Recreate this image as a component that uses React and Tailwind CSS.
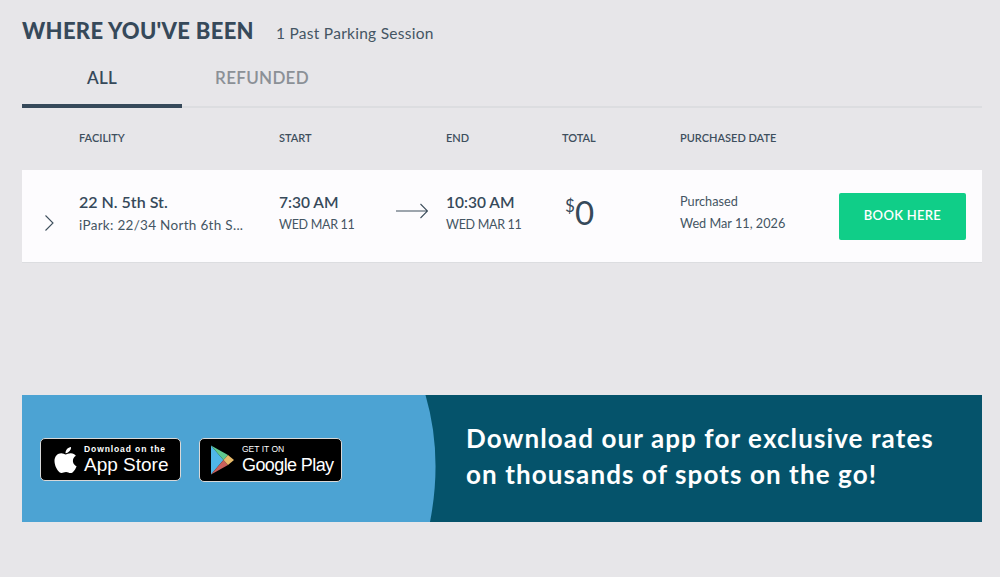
import React from 'react';
import { FaApple } from 'react-icons/fa';

// ============================================================
// PAST SESSIONS PAGE
// ============================================================
const Col = ({ className, children }) => <div className={`shrink-0 ${className}`}>{children}</div>;

const PlayLogo = () => (
  <svg width="24" height="30" viewBox="0 0 24 30" className="shrink-0">
    <polygon points="1,0.500 1,29.500 13.500,15" fill="#4fb6e8" />
    <polygon points="1,0.500 13.500,15 18,10" fill="#5fc98e" />
    <polygon points="1,29.500 13.500,15 18,20" fill="#c9605c" />
    <polygon points="18,10 24,15 18,20 13.500,15" fill="#e8bb6a" />
  </svg>
);

export default function App() {
  return (
    <div className="w-[1000px] h-[577px] overflow-hidden bg-[#e7e6e9] pl-[22px] pr-[18px] pt-[17px] text-[#36495a] font-['Lato',sans-serif]">
      {/* Title */}
      <div className="flex items-baseline h-[28px]">
        <h1 className="text-[22px] font-black leading-[28px] tracking-[0.3px] w-[254px] whitespace-nowrap">WHERE YOU'VE BEEN</h1>
        <span className="text-[15.5px] tracking-[0.27px] text-[#445563]">1 Past Parking Session</span>
      </div>

      {/* Tabs */}
      <div className="flex h-[63px] border-b-2 border-[#dcdde0]">
        <div className="w-[160px] h-[63px] border-b-4 border-[#36495a] flex items-center justify-center pt-[7px] text-[17px] tracking-[0.3px] font-semibold">ALL</div>
        <div className="w-[160px] h-[63px] flex items-center justify-center pt-[3px] text-[17px] tracking-[0.3px] font-semibold text-[#8b9096]">REFUNDED</div>
      </div>

      {/* Column headers */}
      <div className="flex items-center h-[62px] pb-[2px] text-[11px] font-semibold text-[#3e4f5d]">
        <Col className="w-[57px]" />
        <Col className="w-[200px]">FACILITY</Col>
        <Col className="w-[167px]">START</Col>
        <Col className="w-[116px]">END</Col>
        <Col className="w-[118px]">TOTAL</Col>
        <Col>PURCHASED DATE</Col>
      </div>

      {/* Session row */}
      <div className="flex items-center h-[93px] bg-[#fdfcfe] border-b border-[#dcdde0]">
        <Col className="w-[57px] pl-[22px] pt-[13px]">
          <svg width="10" height="16" viewBox="0 0 10 16" fill="none" stroke="#3e4f5d" strokeWidth="1.1">
            <path d="M1.500 0.500 L9 8 L1.500 15.500" />
          </svg>
        </Col>
        <Col className="w-[200px] pb-[6px]">
          <div className="text-[16px] font-semibold leading-[22px]">22 N. 5th St.</div>
          <div className="text-[13.5px] leading-[22px] mt-[1px] tracking-[0.3px] text-[#445563] whitespace-nowrap">iPark: 22/34 North 6th S...</div>
        </Col>
        <Col className="w-[117px] pb-[6px]">
          <div className="text-[15.5px] font-semibold leading-[22px]">7:30 AM</div>
          <div className="text-[12.5px] leading-[22px] mt-[1px] tracking-[-0.3px] text-[#445563] whitespace-nowrap">WED MAR 11</div>
        </Col>
        <Col className="w-[50px] pb-[11px]">
          <svg width="32" height="16" viewBox="0 0 32 16" fill="none" stroke="#3e4f5d" strokeWidth="1.1">
            <path d="M0 8 H31 M24.500 1 L31.500 8 L24.500 15" />
          </svg>
        </Col>
        <Col className="w-[116px] pb-[6px]">
          <div className="text-[15.5px] font-semibold leading-[22px]">10:30 AM</div>
          <div className="text-[12.5px] leading-[22px] mt-[1px] tracking-[-0.3px] text-[#445563] whitespace-nowrap">WED MAR 11</div>
        </Col>
        <Col className="w-[118px] pb-[8px] flex items-start pl-[3px]">
          <span className="text-[17px] leading-[20px] mt-[2px]">$</span>
          <span className="text-[33px] leading-[36px]">0</span>
        </Col>
        <Col className="w-[159px] pb-[9px] text-[12.7px] leading-[22px] text-[#445563]">
          <div>Purchased</div>
          <div>Wed Mar 11, 2026</div>
        </Col>
        <button className="w-[127px] h-[47px] mt-[1px] pb-[2px] rounded-[2px] bg-[#10ce88] text-white text-[13px] font-semibold tracking-[0.3px]">BOOK HERE</button>
      </div>

      {/* App banner */}
      <div className="relative flex items-center mt-[132px] h-[127px] bg-[#4ca3d3] overflow-hidden">
        <svg className="absolute inset-0" width="960" height="127" viewBox="0 0 960 127">
          <path d="M403.500 0 Q421 60 408 127 L960 127 L960 0 Z" fill="#05536b" />
        </svg>
        <div className="relative flex items-center pl-[18px] pt-[2px] gap-[18px] w-[444px] shrink-0">
          <div className="flex items-center w-[141px] h-[43px] bg-black border border-[#d8d8d8] rounded-[5px] text-white pl-[11px] gap-[5px] font-['Liberation_Sans',sans-serif]">
            <FaApple className="w-[27px] h-[30px] shrink-0" />
            <div>
              <div className="text-[8.5px] leading-[10px] font-bold tracking-[0.9px] whitespace-nowrap">Download on the</div>
              <div className="text-[19px] leading-[21px] whitespace-nowrap">App Store</div>
            </div>
          </div>
          <div className="flex items-center w-[143px] h-[44px] bg-black border border-[#d8d8d8] rounded-[5px] text-white pl-[10px] gap-[8px] font-['Liberation_Sans',sans-serif]">
            <PlayLogo />
            <div>
              <div className="text-[8.5px] leading-[10px] whitespace-nowrap">GET IT ON</div>
              <div className="text-[18px] leading-[22px] tracking-[-0.6px] whitespace-nowrap">Google Play</div>
            </div>
          </div>
        </div>
        <div className="relative text-white text-[26px] font-bold leading-[36px] tracking-[1.1px] whitespace-nowrap pb-[5px]">
          <div>Download our app for exclusive rates</div>
          <div>on thousands of spots on the go!</div>
        </div>
      </div>
    </div>
  );
}
